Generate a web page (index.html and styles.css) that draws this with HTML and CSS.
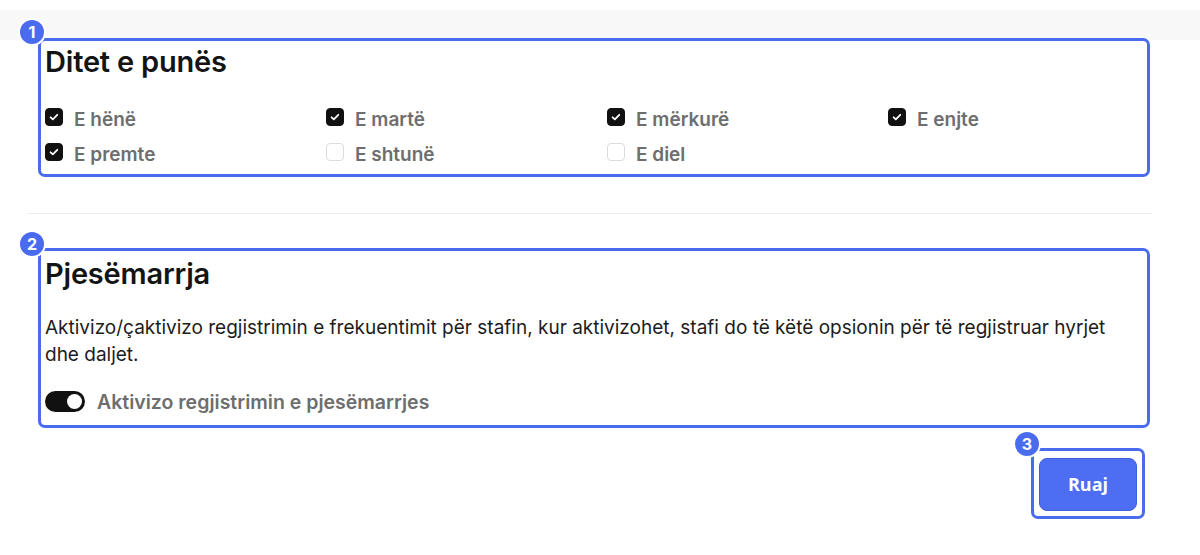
FILE: index.html
```html
<!DOCTYPE html>
<html lang="sq">
<head>
<meta charset="utf-8">
<title>Cilësimet</title>
<link rel="stylesheet" href="styles.css">
</head>
<body>
<div class="page">
  <section class="box box-days">
    <span class="badge">1</span>
    <h2 class="title">Ditet e punës</h2>
    <div class="days">
      <label class="day"><span class="cb on"><svg viewBox="0 0 18 18"><path d="M5.2 9.3l2.5 2.4 5-5.2" fill="none" stroke="#fff" stroke-width="2" stroke-linecap="round" stroke-linejoin="round"/></svg></span><span class="day-name">E hënë</span></label>
      <label class="day"><span class="cb on"><svg viewBox="0 0 18 18"><path d="M5.2 9.3l2.5 2.4 5-5.2" fill="none" stroke="#fff" stroke-width="2" stroke-linecap="round" stroke-linejoin="round"/></svg></span><span class="day-name">E martë</span></label>
      <label class="day"><span class="cb on"><svg viewBox="0 0 18 18"><path d="M5.2 9.3l2.5 2.4 5-5.2" fill="none" stroke="#fff" stroke-width="2" stroke-linecap="round" stroke-linejoin="round"/></svg></span><span class="day-name">E mërkurë</span></label>
      <label class="day"><span class="cb on"><svg viewBox="0 0 18 18"><path d="M5.2 9.3l2.5 2.4 5-5.2" fill="none" stroke="#fff" stroke-width="2" stroke-linecap="round" stroke-linejoin="round"/></svg></span><span class="day-name">E enjte</span></label>
      <label class="day"><span class="cb on"><svg viewBox="0 0 18 18"><path d="M5.2 9.3l2.5 2.4 5-5.2" fill="none" stroke="#fff" stroke-width="2" stroke-linecap="round" stroke-linejoin="round"/></svg></span><span class="day-name">E premte</span></label>
      <label class="day"><span class="cb"></span><span class="day-name">E shtunë</span></label>
      <label class="day"><span class="cb"></span><span class="day-name">E diel</span></label>
    </div>
  </section>

  <hr class="divider">

  <section class="box box-att">
    <span class="badge badge-2">2</span>
    <h2 class="title">Pjesëmarrja</h2>
    <p class="desc">Aktivizo/çaktivizo regjistrimin e frekuentimit për stafin, kur aktivizohet, stafi do të këtë opsionin për të regjistruar hyrjet dhe daljet.</p>
    <div class="toggle-row">
      <span class="toggle"><span class="knob"></span></span>
      <span class="toggle-label">Aktivizo regjistrimin e pjesëmarrjes</span>
    </div>
  </section>

  <div class="actions">
    <div class="box box-btn">
      <span class="badge badge-3">3</span>
      <button class="save" type="button">Ruaj</button>
    </div>
  </div>
</div>
</body>
</html>
```

FILE: styles.css
```css
* { box-sizing: border-box; }

html {
  background: #ffffff linear-gradient(#ffffff 0 10px, #f8f8f8 10px 40px, #ffffff 40px) no-repeat;
  background-size: 100% 555px;
}

body {
  margin: 0;
  font-family: Inter, "Noto Sans", "Liberation Sans", sans-serif;
  color: #161616;
}

.page {
  padding: 38px 0 0 27px;
  width: 1152px;
}

.box {
  position: relative;
  border: 3px solid #4b6bef;
  border-radius: 7px;
  background: #ffffff;
}

.box-days {
  margin-left: 11px;
  width: 1112px;
  padding: 3.5px 4px 2px 4px;
}

.badge {
  position: absolute;
  left: -23px;
  top: -23px;
  width: 28px;
  height: 28px;
  border-radius: 50%;
  background: #4b6bef;
  border: 2px solid #ffffff;
  color: #ffffff;
  font-size: 16px;
  font-weight: 700;
  display: flex;
  align-items: center;
  justify-content: center;
  line-height: 1;
}

.badge-2 { top: -21px; }
.badge-3 { left: -21px; top: -21px; }

.title {
  margin: 0;
  font-size: 29px;
  line-height: 34px;
  font-weight: 600;
  color: #141414;
  letter-spacing: -0.2px;
}

.days {
  margin-top: 23px;
  display: grid;
  grid-template-columns: 281px 281px 281px 1fr;
}

.day {
  display: flex;
  align-items: flex-start;
  height: 35px;
}

.cb {
  width: 18px;
  height: 18px;
  margin-top: 6px;
  border-radius: 4px;
  border: 1px solid #dcdcdc;
  background: #ffffff;
  flex: none;
  display: flex;
}

.cb.on {
  background: #111111;
  border-color: #111111;
}

.cb svg { width: 16px; height: 16px; }

.day-name {
  margin-left: 11px;
  font-size: 19px;
  line-height: 35px;
  font-weight: 600;
  color: #6e6e6e;
}

.divider {
  margin: 36px 0 0 0;
  border: 0;
  height: 1px;
  background: #ececec;
  width: 1125px;
}

.box-att {
  margin-top: 34px;
  margin-left: 11px;
  width: 1112px;
  padding: 6.5px 4px 6px 4px;
}

.desc {
  margin: 23px 0 0 0;
  font-size: 19px;
  line-height: 27px;
  font-weight: 400;
  color: #1c1c1c;
  max-width: 1080px;
}

.toggle-row {
  margin-top: 16.5px;
  height: 34px;
  display: flex;
  align-items: center;
}

.toggle {
  width: 40px;
  height: 21px;
  border-radius: 11px;
  background: #111111;
  display: flex;
  align-items: center;
  justify-content: flex-end;
  padding-right: 3px;
  flex: none;
}

.knob {
  width: 15px;
  height: 15px;
  border-radius: 50%;
  background: #ffffff;
}

.toggle-label {
  margin-left: 12px;
  font-size: 19.5px;
  font-weight: 600;
  color: #6e6e6e;
}

.actions {
  display: flex;
  justify-content: flex-end;
  width: 1118px;
  margin-top: 20px;
}

.box-btn {
  width: 114px;
  height: 71px;
  padding: 7px 5px 5px 5px;
}

.save {
  width: 98px;
  height: 53px;
  border: 1px solid #3f5fd9;
  border-radius: 8px;
  background: #4d6ef2;
  color: #ffffff;
  font-family: "Open Sans", "Noto Sans", sans-serif;
  font-size: 18px;
  font-weight: 700;
  cursor: pointer;
}
```
